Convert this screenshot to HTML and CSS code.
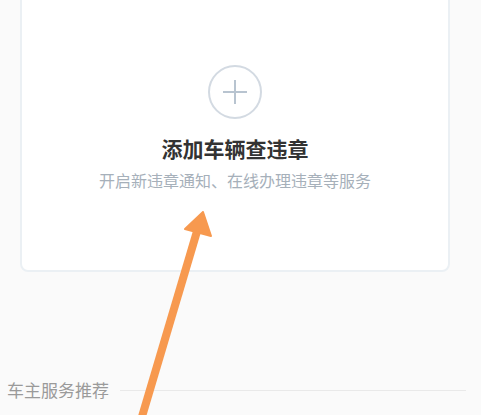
FILE: index.html
```html
<!DOCTYPE html>
<html lang="zh-CN">
<head>
<meta charset="utf-8">
<link rel="stylesheet" href="styles.css">
</head>
<body>
<div class="page">
  <div class="card">
    <div class="add-icon">
      <svg width="54" height="54" viewBox="0 0 54 54">
        <circle cx="27" cy="27" r="26" fill="none" stroke="#d3dae2" stroke-width="2"/>
        <path d="M15 27H39M27 15V39" stroke="#b8c4d0" stroke-width="2" fill="none"/>
      </svg>
    </div>
    <div class="title">添加车辆查违章</div>
    <div class="subtitle">开启新违章通知、在线办理违章等服务</div>
  </div>
  <div class="section-head">
    <span class="section-title">车主服务推荐</span>
    <span class="section-line"></span>
  </div>
  <svg class="arrow" width="481" height="415" viewBox="0 0 481 415">
    <line x1="141" y1="420" x2="198" y2="228" stroke="#f7994f" stroke-width="8"/>
    <polygon points="203,212 185,229 211,236" fill="#f7994f" stroke="#f7994f" stroke-width="2" stroke-linejoin="round"/>
  </svg>
</div>
</body>
</html>
```
FILE: styles.css
```css
html, body {
  margin: 0;
  padding: 0;
  background: #fafafa;
}
.page {
  position: relative;
  width: 481px;
  height: 415px;
  overflow: hidden;
  font-family: "Noto Sans CJK SC", "Noto Sans", sans-serif;
}
.card {
  box-sizing: border-box;
  margin: -10px 31px 0 20px;
  height: 282px;
  background: #fff;
  border: 2px solid #ebf0f4;
  border-radius: 8px;
  padding-top: 73px;
  display: flex;
  flex-direction: column;
  align-items: center;
}
.add-icon {
  width: 54px;
  height: 54px;
}
.add-icon svg {
  display: block;
}
.title {
  margin-top: 15px;
  font-size: 21px;
  line-height: 28px;
  font-weight: 700;
  color: #333;
}
.subtitle {
  margin-top: 7px;
  font-size: 16px;
  line-height: 22px;
  color: #a6b0ba;
}
.section-head {
  margin: 106px 15px 0 7px;
  display: flex;
  align-items: center;
  gap: 11px;
}
.section-title {
  font-size: 17px;
  line-height: 24px;
  color: #9a9a9a;
}
.section-line {
  flex: 1;
  height: 1px;
  background: #e9e9e9;
}
.arrow {
  position: absolute;
  left: 0;
  top: 0;
}
```
